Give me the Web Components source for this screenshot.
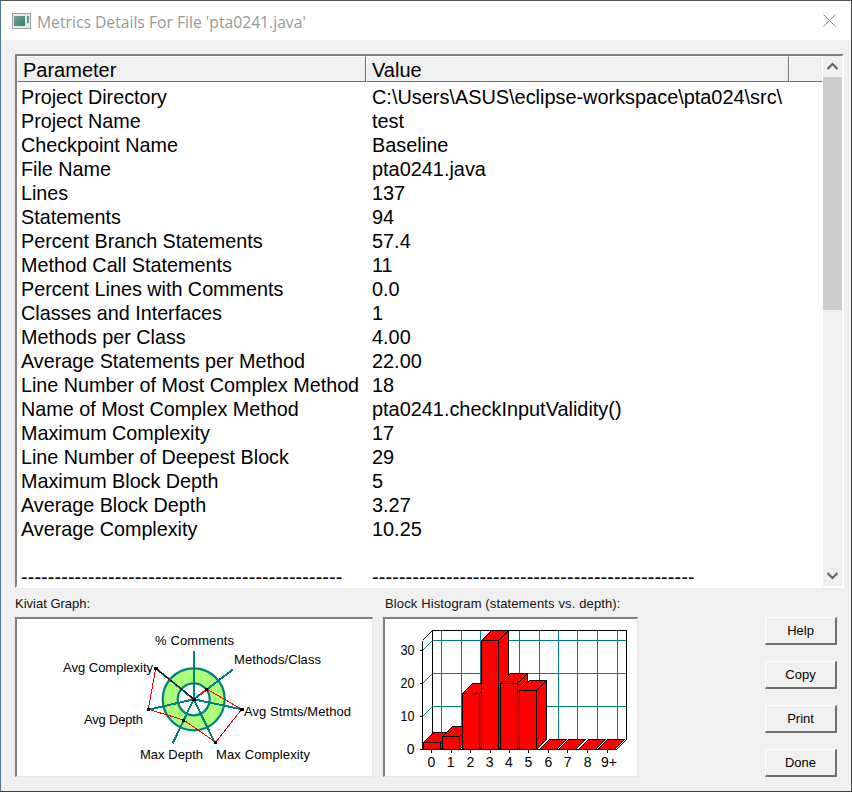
<!DOCTYPE html>
<html><head><meta charset="utf-8"><style>html,body{margin:0;padding:0;background:#f0f0f0}</style></head><body>
<metrics-dialog>
  <title-bar slot="title">Metrics Details For File 'pta0241.java'</title-bar>
  <metrics-table slot="table"></metrics-table>
  <chart-panel slot="kiviat" label="Kiviat Graph:" style="width:358px"><kiviat-graph></kiviat-graph></chart-panel>
  <chart-panel slot="hist" label="Block Histogram (statements vs. depth):" style="width:255px;--label-inset:2px;--label-track:.13px"><block-histogram></block-histogram></chart-panel>
  <dialog-button slot="buttons">Help</dialog-button>
  <dialog-button slot="buttons">Copy</dialog-button>
  <dialog-button slot="buttons">Print</dialog-button>
  <dialog-button slot="buttons">Done</dialog-button>
</metrics-dialog>
<script>
const make=(name,html,setup)=>customElements.define(name,class extends HTMLElement{constructor(){super();this.attachShadow({mode:'open'}).innerHTML=typeof html==='function'?html(this):html;}connectedCallback(){setup&&setup(this)}});
const AR='"Liberation Sans",Arial,sans-serif';

make('metrics-dialog',`<style>
:host{display:flex;flex-direction:column;width:852px;height:792px;box-sizing:border-box;background:#f0f0f0;font-family:${AR};color:#000;border-left:1px solid #4f7396;border-right:1px solid #444;border-bottom:1px solid #3c3c3c;border-top:1px solid #555}
.body{flex:1;display:flex;flex-direction:column;padding:14px 7px 0 14px}
.bottom{display:flex;margin-top:8px}
.panels{display:flex;gap:10px}
.btns{display:flex;flex-direction:column;gap:16px;margin-left:auto;margin-top:21px;margin-right:7px}
</style><slot name="title"></slot><div class="body"><slot name="table"></slot><div class="bottom"><div class="panels"><slot name="kiviat"></slot><slot name="hist"></slot></div><div class="btns"><slot name="buttons"></slot></div></div></div>`);

make('title-bar',`<style>
:host{display:flex;align-items:center;height:39px;background:#fff;color:#999;font:15.7px "Open Sans","Noto Sans",sans-serif;padding-left:11px;flex:none}
svg.i{margin-right:6px;flex:none}
span{flex:1;white-space:nowrap;padding-top:2px}
svg.x{margin-right:15px;flex:none}
</style><svg class="i" width="19" height="16" viewBox="0 0 19 16"><rect x=".5" y=".5" width="18" height="15" fill="#e8e8e8" stroke="#a0a0a0"/><defs><linearGradient id="g" x1="0" x2="1" y1="0" y2="1"><stop offset="0" stop-color="#8098ad"/><stop offset="1" stop-color="#2a8a5a"/></linearGradient></defs><rect x="2" y="3" width="11" height="10" fill="url(#g)"/><rect x="15" y="3" width="2" height="7" fill="#5c9a90"/></svg><span><slot></slot></span><svg class="x" width="13" height="13" viewBox="0 0 13 13"><path d="M.5.5l12 12M12.500.5l-12 12" stroke="#888" fill="none"/></svg>`);

const rows=[["Project Directory","C:\\Users\\ASUS\\eclipse-workspace\\pta024\\src\\"],["Project Name","test"],["Checkpoint Name","Baseline"],["File Name","pta0241.java"],["Lines","137"],["Statements","94"],["Percent Branch Statements","57.4"],["Method Call Statements","11"],["Percent Lines with Comments","0.0"],["Classes and Interfaces","1"],["Methods per Class","4.00"],["Average Statements per Method","22.00"],["Line Number of Most Complex Method","18"],["Name of Most Complex Method","pta0241.checkInputValidity()"],["Maximum Complexity","17"],["Line Number of Deepest Block","29"],["Maximum Block Depth","5"],["Average Block Depth","3.27"],["Average Complexity","10.25"],["\u00a0","\u00a0"],["-".repeat(48),"-".repeat(48)]];
make('metrics-table',`<style>
:host{display:flex;height:534px;box-sizing:border-box;border:2px solid;border-color:#808080 #fff #fff #808080;background:#fff;font:20px ${AR};flex:none}
.main{flex:1;min-width:0;display:flex;flex-direction:column}
.head{display:grid;grid-template-columns:349px 423px 1fr;height:26px;flex:none}
.head div{background:#f0f0f0;border:1px solid;border-color:#fff #707070 #707070 #fff;padding-left:5px;line-height:26px;box-sizing:border-box;height:26px;white-space:nowrap}
.head div:last-child{border-right-color:#fff}
.rows{padding-top:3px}
.sb{width:19px;flex:none;background:#f0f0f0;display:flex;flex-direction:column}
.sb svg{display:block;flex:none}
.thumb{height:233px;background:#cdcdcd;flex:none}
.track{flex:1}
</style><div class="main"><div class="head"><div>Parameter</div><div>Value</div><div></div></div><div class="rows">${rows.map(r=>`<metric-row><span style="font-size:19.75px;${r[0][0]==='-'?'letter-spacing:.12px':''}">${r[0]}</span><span style="font-size:19.9px;${r[0][0]==='-'?'letter-spacing:.1px':''}">${r[1]}</span></metric-row>`).join('')}</div></div><div class="sb"><svg width="19" height="21" viewBox="0 0 19 21"><path d="M4.500 13l5-5 5 5" stroke="#606060" stroke-width="2" fill="none"/></svg><div class="thumb"></div><div class="track"></div><svg width="19" height="21" viewBox="0 0 19 21"><path d="M4.500 8l5 5 5-5" stroke="#606060" stroke-width="2" fill="none"/></svg></div>`);
make('metric-row',`<style>:host{display:grid;grid-template-columns:351px 1fr;height:24px;line-height:24px;padding-left:4px;white-space:nowrap}::slotted(span){display:block}</style><slot></slot>`);

make('chart-panel',h=>`<style>
:host{display:flex;flex-direction:column;flex:none}
.l{font:13px ${AR};color:#111;height:21px;line-height:15px;white-space:nowrap;padding-left:var(--label-inset,0);letter-spacing:var(--label-track,0)}
.b{height:160px;box-sizing:border-box;border:1px solid;border-color:#808080 #e8e8e8 #e8e8e8 #808080;border-width:2px 1px 1px 2px;background:#fff;overflow:hidden}
</style><div class="l">${h.getAttribute('label')}</div><div class="b"><slot></slot></div>`);

const teal='#008080';
make('kiviat-graph',`<style>:host{display:block}svg{display:block}text{font:13px ${AR};fill:#000}</style>
<svg width="355" height="157" viewBox="17 619 355 157">
<circle cx="193.700" cy="699.300" r="31" fill="#adff7a" stroke="${teal}" stroke-width="2.200"/>
<circle cx="193.700" cy="699.300" r="16" fill="#fff" stroke="${teal}" stroke-width="2.200"/>
<g stroke="${teal}" stroke-width="2" shape-rendering="crispEdges"><path d="M193.700 699.300L193.700 651M193.700 699.300L233.300 669.300M193.700 699.300L244.300 709.800M193.700 699.300L215 743M193.700 699.300L172.700 743.300M193.700 699.300L148.300 709.800M193.700 699.300L155 667.700"/></g>
<path d="M194.300 699.300L206.700 689 241.700 709.300 215.700 742.300 183.700 720 148.300 709.300 155.700 668.300Z" fill="none" stroke="#f00" shape-rendering="crispEdges"/>
<path d="M155.700 668.300L194.300 699.300" stroke="#400" fill="none" shape-rendering="crispEdges"/>
<g fill="#000"><rect x="192" y="698" width="4" height="3"/><rect x="205" y="688" width="3" height="3"/><rect x="240" y="708" width="4" height="3"/><rect x="214" y="741" width="3" height="3"/><rect x="182" y="719" width="3" height="3"/><rect x="147" y="708" width="3" height="3"/><rect x="154" y="667" width="4" height="3"/></g>
<text x="155" y="645" textLength="79">% Comments</text>
<text x="234" y="664" textLength="87">Methods/Class</text>
<text x="63" y="672" textLength="90">Avg Complexity</text>
<text x="244" y="716" textLength="107">Avg Stmts/Method</text>
<text x="84" y="724" textLength="59">Avg Depth</text>
<text x="140" y="759" textLength="63">Max Depth</text>
<text x="216" y="759" textLength="94">Max Complexity</text>
</svg>`);

const tops=[742,736,693,640,683,690,749,749,749,749];
const bxs=[423,442,462,481,500,519,539,558,578,597];
const W=17,D=10,B=749;
let bs='';
tops.forEach((t,i)=>{const x=bxs[i]+.5,T=t+.5,BB=B+.5;
 if(t>=B){bs+=`<path d="M${x} ${BB}L${x+D} ${BB-10}H${x+W+D}L${x+W} ${BB}Z" fill="#f00" stroke="#000"/>`;}
 else{bs+=`<path d="M${x+W} ${T}L${x+W+D} ${T-10}V${BB-10}L${x+W} ${BB}Z" fill="#f00" stroke="#000"/><path d="M${x} ${T}L${x+D} ${T-10}H${x+W+D}L${x+W} ${T}Z" fill="#f00" stroke="#000"/><rect x="${x}" y="${T}" width="${W}" height="${BB-T}" fill="#f00" stroke="#000"/>`;}
});
let grid='';
[441,461,480,500,519,539,558,577,597,617].forEach(x=>grid+=`M${x+.5} 630.500V739.500`);
[640.5,673.5,706.5].forEach(y=>grid+=`M432.500 ${y}H626.500M422.500 ${y+10}L432.500 ${y}`);
let ticks='';
[650.5,683.5,716.5,749.5].forEach(y=>ticks+=`M419.500 ${y}H422.500`);
[431,451,470,490,509,528,548,567,587,607].forEach(x=>ticks+=`M${x+.5} 749.500V753`);
const xl=[431.3,450.7,470.3,489.7,509,528.3,548.3,567.7,587.7,609];
const xs=['0','1','2','3','4','5','6','7','8','9+'];
make('block-histogram',`<style>:host{display:block}svg{display:block}text{font:14px ${AR};fill:#000}</style>
<svg width="252" height="157" viewBox="385 619 252 157">
<g shape-rendering="crispEdges">
<path d="${grid}" stroke="${teal}" fill="none"/>
<path d="M422.500 640.500L432.500 630.500H626.500V739.500L616.500 749.500M432.500 630.500V739.500M422.500 640.500V749.500H616.500" stroke="#000" fill="none"/>
<path d="${ticks}" stroke="#000" fill="none"/>
<clipPath id="c"><rect x="415" y="630" width="215" height="122"/></clipPath>
<g clip-path="url(#c)">${bs}</g>
<path d="M422.500 640.500L432.500 630.500H626.500" stroke="#000" fill="none"/>
</g>
<g text-anchor="end"><text x="414.500" y="655" textLength="14" lengthAdjust="spacingAndGlyphs">30</text><text x="414.500" y="688" textLength="14" lengthAdjust="spacingAndGlyphs">20</text><text x="414.500" y="721" textLength="14" lengthAdjust="spacingAndGlyphs">10</text><text x="414.500" y="754">0</text></g>
<g text-anchor="middle">${xs.map((s,i)=>`<text x="${xl[i]}" y="767">${s}</text>`).join('')}</g>
</svg>`);

make('dialog-button',`<style>
:host{display:flex;align-items:center;justify-content:center;width:72px;height:28px;box-sizing:border-box;background:#f0f0f0;border:1px solid;border-color:#fff #707070 #707070 #fff;border-width:1px 2px 2px 1px;font:13px ${AR};color:#000;flex:none}
</style><slot></slot>`);
</script>
</body></html>
